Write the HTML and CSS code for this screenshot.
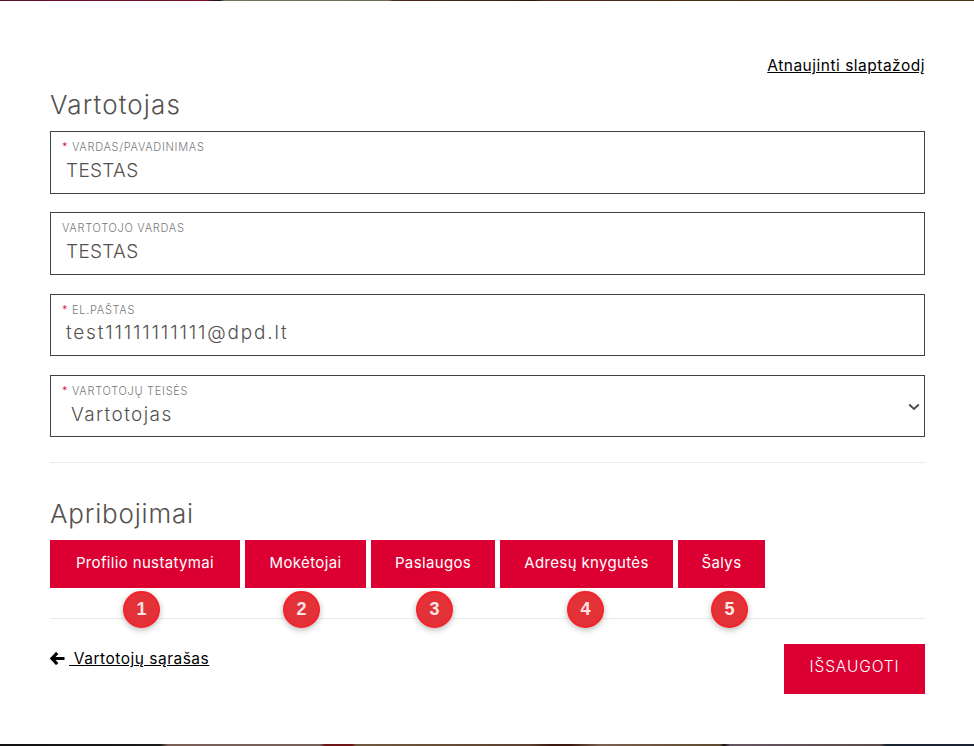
FILE: index.html
```html
<!DOCTYPE html>
<html lang="lt">
<head>
<meta charset="utf-8">
<title>Vartotojas</title>
<link rel="stylesheet" href="styles.css">
</head>
<body>
<div class="strip-top"></div>
<main class="page">
  <div class="refresh-row"><a class="link" href="#">Atnaujinti slaptažodį</a></div>
  <h2 class="heading">Vartotojas</h2>
  <div class="fields">
    <div class="field"><div class="label"><span class="req">*</span> VARDAS/PAVADINIMAS</div><div class="value">TESTAS</div></div>
    <div class="field"><div class="label">VARTOTOJO VARDAS</div><div class="value">TESTAS</div></div>
    <div class="field"><div class="label"><span class="req">*</span> EL.PAŠTAS</div><div class="value value-email">test11111111111@dpd.lt</div></div>
    <div class="field field-select"><div class="label"><span class="req">*</span> VARTOTOJŲ TEISĖS</div><div class="value value-select">Vartotojas</div>
      <svg class="chevron" width="12" height="8" viewBox="0 0 12 8"><path d="M1.2 1.5 6 6l4.8-4.5" fill="none" stroke="#4d4d4f" stroke-width="2"/></svg>
    </div>
  </div>
  <hr class="rule rule-a">
  <h2 class="heading heading-b">Apribojimai</h2>
  <div class="tabs">
    <button class="tab tab-1">Profilio nustatymai</button>
    <button class="tab tab-2">Mokėtojai</button>
    <button class="tab tab-3">Paslaugos</button>
    <button class="tab tab-4">Adresų knygutės</button>
    <button class="tab tab-5">Šalys</button>
    <span class="badge badge-1">1</span>
    <span class="badge badge-2">2</span>
    <span class="badge badge-3">3</span>
    <span class="badge badge-4">4</span>
    <span class="badge badge-5">5</span>
  </div>
  <hr class="rule rule-b">
  <div class="footer-row">
    <div class="back">
      <svg class="arrow" width="15" height="13" viewBox="0 0 15 13"><path d="M7.2 1 2 6.5l5.2 5.5M3 6.5h11.5" fill="none" stroke="#000" stroke-width="3.2"/></svg>
      <a class="link" href="#">&nbsp;Vartotojų sąrašas</a>
    </div>
    <button class="save">IŠSAUGOTI</button>
  </div>
</main>
<div class="strip-bottom"></div>
</body>
</html>
```

FILE: styles.css
```css
* { box-sizing: border-box; }
html, body { margin: 0; padding: 0; background: #fff; }
body {
  width: 974px;
  height: 746px;
  overflow: hidden;
  display: flex;
  flex-direction: column;
  font-family: Inter, "DejaVu Sans", sans-serif;
  color: #55514f;
}
.strip-top {
  height: 1px;
  flex: none;
  background: linear-gradient(90deg, #5a1020 0, #7a1028 205px, #111 220px, #77735f 224px, #6d6a58 388px, #4a2a18 394px, #3a1f10 520px, #1e1408 530px, #4a2c16 545px, #4e3218 974px);
}
.strip-bottom {
  height: 2px;
  flex: none;
  margin-top: auto;
  background: linear-gradient(90deg, #111 0, #1a1a1a 160px, #7a5f58 168px, #76605a 320px, #6e1518 325px, #6e1518 352px, #70593f 356px, #5a4030 530px, #3a1a10 550px, #3a1a10 570px, #7a6050 600px, #5e4a30 720px, #111 724px, #645660 730px, #5a4a4a 880px, #1a2430 886px, #1a2430 974px);
}
.page {
  padding: 0 49px 0 50px;
  display: flex;
  flex-direction: column;
}
.refresh-row {
  display: flex;
  justify-content: flex-end;
  padding-top: 56px;
  height: 76px;
  line-height: 18px;
}
.link {
  color: #000;
  font-size: 15.5px;
  text-decoration: underline;
  letter-spacing: .5px;
}
.heading {
  margin: 0;
  font-weight: 300;
  font-size: 26px;
  line-height: 30px;
  letter-spacing: 1.1px;
  color: #55514f;
  padding-top: 13px;
  height: 54px;
}
.heading-b { letter-spacing: .8px; }
.fields {
  display: flex;
  flex-direction: column;
  gap: 18.75px;
}
.field {
  position: relative;
  height: 62.55px;
  border: 1px solid #414042;
  padding: 8px 11px 0;
}
.label {
  font-size: 11px;
  font-weight: 300;
  line-height: 14px;
  letter-spacing: .7px;
  color: #77797c;
}
.req { color: #dc0032; }
.value {
  font-size: 19px;
  font-weight: 300;
  line-height: 26px;
  padding-left: 4px;
  margin-top: 4px;
  letter-spacing: .3px;
  color: #55514f;
}
.value-email { letter-spacing: 1.8px; margin-top: 3px; }
.value-select { padding-left: 9px; margin-top: 4px; letter-spacing: 1.4px; }
.chevron {
  position: absolute;
  right: 4px;
  top: 27px;
}
.rule {
  border: 0;
  height: 1px;
  margin: 0;
  background: #eaeaea;
}
.rule-a { margin-top: 25px; }
.heading-b { padding-top: 36px; height: 77px; }
.tabs {
  position: relative;
  display: flex;
  gap: 5px;
}
.tab {
  height: 48px;
  border: 0;
  background: #dc0032;
  color: #fff;
  font: inherit;
  font-size: 15px;
  letter-spacing: .35px;
  padding: 0 0 3px;
}
.tab-1 { width: 190px; }
.tab-2 { width: 121px; }
.tab-3 { width: 124px; }
.tab-4 { width: 173px; }
.tab-5 { width: 87px; }
.badge {
  position: absolute;
  top: 51px;
  width: 37px;
  height: 37px;
  border-radius: 50%;
  border: 2px solid #f5222a;
  background: #e23238;
  color: #fbe4e4;
  font-family: "Liberation Sans", sans-serif;
  font-weight: 700;
  font-size: 18px;
  line-height: 33px;
  text-align: center;
  box-shadow: 0 2px 6px rgba(0,0,0,.28);
  z-index: 1;
}
.badge-1 { left: 73px; }
.badge-2 { left: 233px; }
.badge-3 { left: 366px; }
.badge-4 { left: 517px; }
.badge-5 { left: 661px; }
.rule-b { margin-top: 30px; }
.footer-row {
  display: flex;
  justify-content: space-between;
  align-items: flex-start;
  padding-top: 25px;
}
.back {
  display: flex;
  align-items: center;
  gap: 4px;
  height: 28px;
}
.arrow { flex: none; }
.save {
  width: 141px;
  height: 50px;
  border: 0;
  background: #dc0032;
  color: #fff;
  font: inherit;
  font-size: 15.5px;
  font-weight: 300;
  letter-spacing: .9px;
  padding: 0 0 5px;
}
```
